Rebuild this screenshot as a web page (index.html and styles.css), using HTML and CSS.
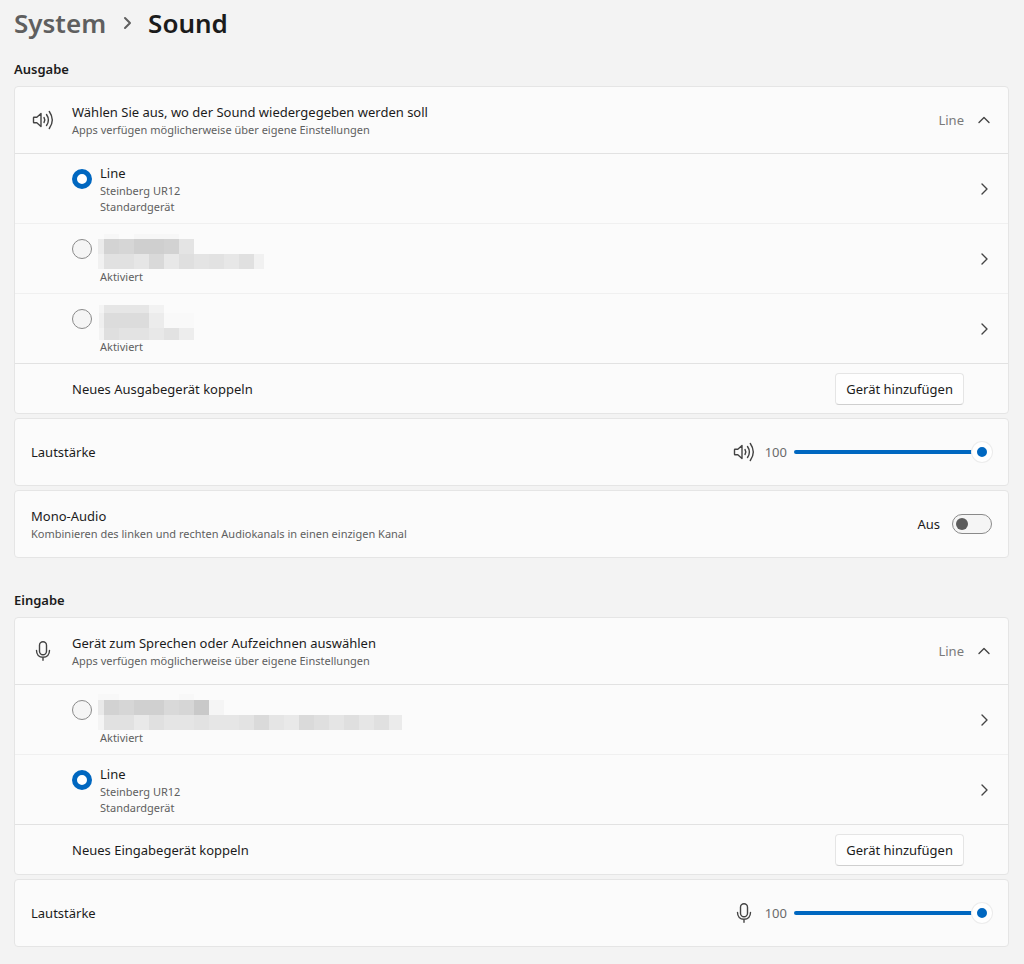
FILE: index.html
```
<!DOCTYPE html>
<html lang="de">
<head>
  <meta charset="UTF-8">
  <meta name="viewport" content="width=device-width, initial-scale=1.0">
  <title>System – Sound</title>
  <link rel="stylesheet" href="styles.css">
</head>
<body>
  <!-- shared icons -->
  <svg class="sprite" aria-hidden="true">
    <symbol id="icon-speaker" viewBox="0 0 24 20">
      <path d="M3 7.200h2.800L10 3.400v13.200l-4.200-3.800H3q-.5 0-.5-.5V7.700q0-.5.5-.5z"/>
      <path d="M13 7.500q1.600 2.500 0 5"/>
      <path d="M15.500 4.500q3.800 5.500 0 11"/>
      <path d="M18.300 1.500q6 8.500 0 17"/>
    </symbol>
    <symbol id="icon-mic" viewBox="0 0 24 20">
      <rect x="8.500" y="0.800" width="7" height="13" rx="3.500"/>
      <path d="M5.500 9.500c0 4 2.500 6.800 6.500 6.800s6.500-2.800 6.500-6.800M12 16.300v3"/>
    </symbol>
    <symbol id="icon-right" viewBox="0 0 16 16">
      <path d="M6 3l5 5-5 5"/>
    </symbol>
    <symbol id="icon-up" viewBox="0 0 16 16">
      <path d="M3 10.500l5-5 5 5"/>
    </symbol>
  </svg>

  <main>
    <h1 class="breadcrumb">
      <a href="#">System</a>
      <svg class="chevron"><use href="#icon-right"/></svg>
      <span>Sound</span>
    </h1>

    <section>
      <h2>Ausgabe</h2>

      <div class="card">
        <div class="row row-main">
          <svg class="icon"><use href="#icon-speaker"/></svg>
          <div class="text">
            <div class="title">Wählen Sie aus, wo der Sound wiedergegeben werden soll</div>
            <div class="sub">Apps verfügen möglicherweise über eigene Einstellungen</div>
          </div>
          <span class="value">Line</span>
          <button class="icon-btn" aria-label="Einklappen"><svg class="chevron"><use href="#icon-up"/></svg></button>
        </div>

        <div class="row device">
          <input type="radio" name="output" id="out1" checked>
          <label class="text" for="out1">
            <span class="title">Line</span>
            <span class="sub">Steinberg UR12</span>
            <span class="sub">Standardgerät</span>
          </label>
          <button class="icon-btn" aria-label="Eigenschaften"><svg class="chevron"><use href="#icon-right"/></svg></button>
        </div>

        <div class="row device">
          <input type="radio" name="output" id="out2">
          <label class="text" for="out2">
            <svg class="mosaic" width="170" height="36">
              <g fill="#f7f7f7"><rect x="4" y="1" width="15" height="5"/><rect x="34" y="1" width="45" height="5"/></g>
              <rect x="-2" y="6" width="6" height="15" fill="#ebebeb"/>
              <rect x="4" y="6" width="15" height="15" fill="#d3d3d3"/>
              <rect x="19" y="6" width="15" height="15" fill="#d6d6d6"/>
              <rect x="34" y="6" width="30" height="15" fill="#cfcfcf"/>
              <rect x="64" y="6" width="15" height="15" fill="#d2d2d2"/>
              <rect x="79" y="6" width="15" height="15" fill="#e4e4e4"/>
              <rect x="-2" y="21" width="6" height="15" fill="#f1f1f1"/>
              <rect x="4" y="21" width="30" height="15" fill="#e1e1e1"/>
              <rect x="34" y="21" width="15" height="15" fill="#e6e6e6"/>
              <rect x="49" y="21" width="15" height="15" fill="#d9d9d9"/>
              <rect x="64" y="21" width="15" height="15" fill="#e8e8e8"/>
              <rect x="79" y="21" width="15" height="15" fill="#dfdfdf"/>
              <rect x="94" y="21" width="15" height="15" fill="#e4e4e4"/>
              <rect x="109" y="21" width="15" height="15" fill="#e2e2e2"/>
              <rect x="124" y="21" width="15" height="15" fill="#e7e7e7"/>
              <rect x="139" y="21" width="15" height="15" fill="#e0e0e0"/>
              <rect x="154" y="21" width="10" height="15" fill="#f1f1f1"/>
            </svg>
            <span class="sub">Aktiviert</span>
          </label>
          <button class="icon-btn" aria-label="Eigenschaften"><svg class="chevron"><use href="#icon-right"/></svg></button>
        </div>

        <div class="row device">
          <input type="radio" name="output" id="out3">
          <label class="text" for="out3">
            <svg class="mosaic" width="170" height="36">
              <rect x="-1" y="2" width="5" height="8" fill="#f4f4f4"/>
              <rect x="4" y="2" width="45" height="8" fill="#e6e6e6"/>
              <rect x="49" y="2" width="15" height="8" fill="#f2f2f2"/>
              <rect x="-1" y="10" width="5" height="15" fill="#efefef"/>
              <rect x="4" y="10" width="45" height="15" fill="#dcdcdc"/>
              <rect x="49" y="10" width="15" height="15" fill="#ececec"/>
              <rect x="64" y="10" width="30" height="15" fill="#f9f9f9"/>
              <rect x="-1" y="25" width="5" height="12" fill="#f3f3f3"/>
              <rect x="4" y="25" width="15" height="12" fill="#dfdfdf"/>
              <rect x="19" y="25" width="30" height="12" fill="#e3e3e3"/>
              <rect x="49" y="25" width="15" height="12" fill="#e8e8e8"/>
              <rect x="64" y="25" width="15" height="12" fill="#e2e2e2"/>
              <rect x="79" y="25" width="15" height="12" fill="#ededed"/>
            </svg>
            <span class="sub">Aktiviert</span>
          </label>
          <button class="icon-btn" aria-label="Eigenschaften"><svg class="chevron"><use href="#icon-right"/></svg></button>
        </div>

        <div class="row pair">
          <div class="text title">Neues Ausgabegerät koppeln</div>
          <button class="btn">Gerät hinzufügen</button>
        </div>
      </div>

      <div class="card">
        <div class="row row-main">
          <label class="text title" for="outVolume">Lautstärke</label>
          <div class="volume">
            <svg class="icon"><use href="#icon-speaker"/></svg>
            <output for="outVolume">100</output>
            <input type="range" id="outVolume" min="0" max="100" value="100">
          </div>
        </div>
      </div>

      <div class="card">
        <div class="row row-main">
          <label class="text" for="mono">
            <span class="title">Mono-Audio</span>
            <span class="sub">Kombinieren des linken und rechten Audiokanals in einen einzigen Kanal</span>
          </label>
          <span class="title">Aus</span>
          <input type="checkbox" role="switch" class="toggle" id="mono">
        </div>
      </div>
    </section>

    <section>
      <h2>Eingabe</h2>

      <div class="card">
        <div class="row row-main">
          <svg class="icon"><use href="#icon-mic"/></svg>
          <div class="text">
            <div class="title">Gerät zum Sprechen oder Aufzeichnen auswählen</div>
            <div class="sub">Apps verfügen möglicherweise über eigene Einstellungen</div>
          </div>
          <span class="value">Line</span>
          <button class="icon-btn" aria-label="Einklappen"><svg class="chevron"><use href="#icon-up"/></svg></button>
        </div>

        <div class="row device">
          <input type="radio" name="input" id="in1">
          <label class="text" for="in1">
            <svg class="mosaic" width="304" height="36">
              <g fill="#f8f8f8"><rect x="-2" y="0" width="21" height="6"/><rect x="79" y="0" width="15" height="6"/></g>
              <rect x="-2" y="6" width="6" height="15" fill="#e9e9e9"/>
              <rect x="4" y="6" width="15" height="15" fill="#d2d2d2"/>
              <rect x="19" y="6" width="15" height="15" fill="#d6d6d6"/>
              <rect x="34" y="6" width="30" height="15" fill="#d0d0d0"/>
              <rect x="64" y="6" width="15" height="15" fill="#d9d9d9"/>
              <rect x="79" y="6" width="15" height="15" fill="#d6d6d6"/>
              <rect x="94" y="6" width="15" height="15" fill="#c9c9c9"/>
              <rect x="109" y="6" width="15" height="15" fill="#f5f5f5"/>
              <rect x="-2" y="21" width="6" height="15" fill="#f4f4f4"/>
              <rect x="4" y="21" width="30" height="15" fill="#e1e1e1"/>
              <rect x="34" y="21" width="15" height="15" fill="#e9e9e9"/>
              <rect x="49" y="21" width="15" height="15" fill="#e0e0e0"/>
              <rect x="64" y="21" width="30" height="15" fill="#e5e5e5"/>
              <rect x="94" y="21" width="15" height="15" fill="#e2e2e2"/>
              <rect x="109" y="21" width="30" height="15" fill="#e6e6e6"/>
              <rect x="139" y="21" width="15" height="15" fill="#e3e3e3"/>
              <rect x="154" y="21" width="15" height="15" fill="#dadada"/>
              <rect x="169" y="21" width="15" height="15" fill="#e5e5e5"/>
              <rect x="184" y="21" width="15" height="15" fill="#e9e9e9"/>
              <rect x="199" y="21" width="15" height="15" fill="#dadada"/>
              <rect x="214" y="21" width="15" height="15" fill="#dfdfdf"/>
              <rect x="229" y="21" width="15" height="15" fill="#e5e5e5"/>
              <rect x="244" y="21" width="15" height="15" fill="#dfdfdf"/>
              <rect x="259" y="21" width="15" height="15" fill="#e6e6e6"/>
              <rect x="274" y="21" width="15" height="15" fill="#e0e0e0"/>
              <rect x="289" y="21" width="13" height="15" fill="#ebebeb"/>
            </svg>
            <span class="sub">Aktiviert</span>
          </label>
          <button class="icon-btn" aria-label="Eigenschaften"><svg class="chevron"><use href="#icon-right"/></svg></button>
        </div>

        <div class="row device">
          <input type="radio" name="input" id="in2" checked>
          <label class="text" for="in2">
            <span class="title">Line</span>
            <span class="sub">Steinberg UR12</span>
            <span class="sub">Standardgerät</span>
          </label>
          <button class="icon-btn" aria-label="Eigenschaften"><svg class="chevron"><use href="#icon-right"/></svg></button>
        </div>

        <div class="row pair">
          <div class="text title">Neues Eingabegerät koppeln</div>
          <button class="btn">Gerät hinzufügen</button>
        </div>
      </div>

      <div class="card">
        <div class="row row-main">
          <label class="text title" for="inVolume">Lautstärke</label>
          <div class="volume">
            <svg class="icon"><use href="#icon-mic"/></svg>
            <output for="inVolume">100</output>
            <input type="range" id="inVolume" min="0" max="100" value="100">
          </div>
        </div>
      </div>
    </section>
  </main>
</body>
</html>
```

FILE: styles.css
```
* {
  box-sizing: border-box;
}
body {
  margin: 0;
  background: #f3f3f3;
  color: #1b1b1b;
  font-family: 'Segoe UI', 'Noto Sans', 'Open Sans', sans-serif;
  font-size: 13px;
  line-height: 20px;
}
main {
  padding: 6px 15px 16px 14px;
}
.sprite {
  position: absolute;
  width: 0;
  height: 0;
}
.breadcrumb {
  display: flex;
  align-items: center;
  gap: 13px;
  margin: 0 0 19px;
  font-size: 26px;
  font-weight: 600;
  line-height: 34px;
}
.breadcrumb a {
  color: #5f5f5f;
  text-decoration: none;
}
h2 {
  margin: 0 0 7px;
  font-size: 13px;
  font-weight: 600;
  line-height: 20px;
}
section + section {
  margin-top: 32px;
}

/* cards */
.card {
  background: #fbfbfb;
  border: 1px solid #e5e5e5;
  border-radius: 4px;
}
.card + .card {
  margin-top: 4px;
}
.row {
  display: flex;
  align-items: center;
  padding: 0 16px;
}
.row-main {
  min-height: 66px;
}
.text {
  flex: 1;
  min-width: 0;
}
.title {
  display: block;
}
.sub {
  display: block;
  color: #5f5f5f;
  font-size: 11px;
  line-height: 16px;
}
.value {
  margin-right: 12px;
  color: #7a7a7a;
}

/* devices */
.device {
  min-height: 70px;
  padding-left: 57px;
  border-top: 1px solid #f0f0f0;
}
.row-main + .device {
  border-top-color: #e2e2e2;
}
.device input {
  appearance: none;
  align-self: flex-start;
  width: 20px;
  height: 20px;
  margin: 15px 8px 0 0;
  border: 1px solid #8a8a8a;
  border-radius: 50%;
  background: #f5f5f5;
}
.device input:checked {
  border: 5px solid #0067c0;
  background: white;
}
.mosaic {
  display: block;
  overflow: visible;
}
.pair {
  min-height: 50px;
  padding-left: 57px;
  padding-right: 44px;
  border-top: 1px solid #e2e2e2;
}

/* icons */
.icon,
.chevron {
  display: block;
  flex: none;
  fill: none;
  stroke: #444;
  stroke-width: 1.4;
  stroke-linecap: round;
  stroke-linejoin: round;
}
.icon {
  width: 24px;
  height: 20px;
}
.row-main > .icon {
  margin-right: 17px;
}
.chevron {
  width: 16px;
  height: 16px;
}
.breadcrumb .chevron {
  stroke: #5f5f5f;
  stroke-width: 2;
}

/* controls */
.icon-btn {
  padding: 0;
  border: none;
  background: none;
}
.btn {
  height: 32px;
  padding: 0 10px;
  border: 1px solid #e5e5e5;
  border-bottom-color: #cfcfcf;
  border-radius: 4px;
  background: #fefefe;
  color: #1b1b1b;
  font: inherit;
}
.volume {
  display: flex;
  align-items: center;
}
.volume output {
  margin: 0 7px 0 9px;
  color: #6a6a6a;
}
.volume input {
  appearance: none;
  width: 198px;
  height: 20px;
  margin: 0;
  background: none;
}
.volume input::-webkit-slider-runnable-track {
  height: 4px;
  border-radius: 2px;
  background: #0067c0;
}
.volume input::-webkit-slider-thumb {
  appearance: none;
  width: 20px;
  height: 20px;
  margin-top: -8px;
  border: 5px solid white;
  border-radius: 50%;
  background: #0067c0;
  box-shadow: 0 0 0 1px #ececec;
}
.toggle {
  appearance: none;
  width: 40px;
  height: 20px;
  margin: 0 0 0 12px;
  padding: 3px;
  border: 1px solid #8a8a8a;
  border-radius: 10px;
  background: #f5f5f5;
}
.toggle::before {
  content: '';
  display: block;
  width: 12px;
  height: 12px;
  border-radius: 50%;
  background: #5c5c5c;
}
.toggle:checked::before {
  margin-left: 20px;
}
```
